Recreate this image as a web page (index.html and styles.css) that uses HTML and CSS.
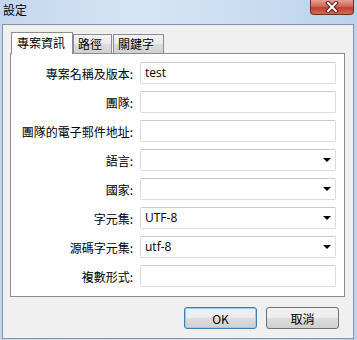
FILE: index.html
```html
<!DOCTYPE html>
<html lang="zh-Hant">
<head>
    <meta charset="UTF-8">
    <title>設定</title>
    <link rel="stylesheet" href="styles.css">
</head>
<body>
    <div class="window">
        <div class="titlebar">
            <span class="title">設定</span>
            <div class="close">
                <svg width="16" height="12" viewBox="0 0 16 12">
                    <path d="M4 2 L12 10 M12 2 L4 10" stroke="#5a1f18" stroke-width="4" stroke-linecap="square"/>
                    <path d="M4 2 L12 10 M12 2 L4 10" stroke="#ffffff" stroke-width="2" stroke-linecap="square"/>
                </svg>
            </div>
        </div>
        <div class="client">
            <div class="tabs">
                <div class="tab active">專案資訊</div>
                <div class="tab">路徑</div>
                <div class="tab">關鍵字</div>
            </div>
            <div class="pane">
                <label>專案名稱及版本:</label>
                <div class="field">test</div>
                <label>團隊:</label>
                <div class="field"></div>
                <label>團隊的電子郵件地址:</label>
                <div class="field"></div>
                <label>語言:</label>
                <div class="field select"></div>
                <label>國家:</label>
                <div class="field select"></div>
                <label>字元集:</label>
                <div class="field select">UTF-8</div>
                <label>源碼字元集:</label>
                <div class="field select">utf-8</div>
                <label>複數形式:</label>
                <div class="field"></div>
            </div>
            <div class="buttons">
                <button class="btn default">OK</button>
                <button class="btn">取消</button>
            </div>
        </div>
    </div>
</body>
</html>
```

FILE: styles.css
```css
html, body {
    margin: 0;
    padding: 0;
}

body {
    font-family: "Noto Sans CJK TC", "Noto Sans", sans-serif;
    font-size: 12px;
    color: #000;
}

.window {
    width: 357px;
    height: 340px;
    box-sizing: border-box;
    padding: 0 3px 1px 2px;
    display: flex;
    flex-direction: column;
    background: linear-gradient(90deg, #c3d7ee, #d6e5f6 40%, #c9dcf1 70%, #bcd2ec);
}

.titlebar {
    height: 24px;
    display: flex;
    align-items: flex-start;
}

.title {
    margin-left: 1px;
    margin-top: 2px;
    line-height: 16px;
}

.close {
    margin-left: auto;
    width: 44px;
    height: 15px;
    box-sizing: border-box;
    border: 1px solid #6b2b24;
    border-top: none;
    border-radius: 0 0 4px 4px;
    background: linear-gradient(#e6a192, #d0685a 45%, #c0402f 55%, #d56c4f);
    display: flex;
    align-items: center;
    justify-content: center;
}

.client {
    flex: 1;
    border: 1px solid #8693a6;
    background: #f0f0f0;
    padding: 7px 8px 0 7px;
    display: flex;
    flex-direction: column;
}

.tabs {
    height: 21px;
    display: flex;
    align-items: flex-end;
    padding-left: 1px;
    gap: 1px;
}

.tab {
    height: 19px;
    box-sizing: border-box;
    border: 1px solid #898c95;
    border-bottom: none;
    padding: 0 9px 0 4px;
    line-height: 18px;
    background: linear-gradient(#f3f3f3, #ebebeb 50%, #dddddd 51%, #cfcfcf);
}

.tab.active {
    height: 22px;
    margin-bottom: -1px;
    margin-right: -1px;
    padding: 0 7px 0 5px;
    line-height: 20px;
    background: #fff;
    position: relative;
    z-index: 1;
}

.pane {
    border: 1px solid #898c95;
    background: #fff;
    padding: 8px 8px 9px 0;
    display: grid;
    grid-template-columns: 125px 1fr;
    column-gap: 4px;
    row-gap: 7px;
    align-items: center;
}

.pane label {
    text-align: right;
    padding-right: 3px;
}

.field {
    height: 22px;
    box-sizing: border-box;
    border: 1px solid #dadde3;
    border-top-color: #c9ccd2;
    border-radius: 2px;
    padding-left: 4px;
    line-height: 20px;
    font-family: "Open Sans", "Noto Sans", sans-serif;
    font-size: 12px;
    position: relative;
}

.field.select::after {
    content: "";
    position: absolute;
    right: 4px;
    top: 8px;
    border-left: 4px solid transparent;
    border-right: 4px solid transparent;
    border-top: 4px solid #000;
}

.buttons {
    margin-top: 10px;
    display: flex;
    justify-content: flex-end;
    gap: 9px;
    padding-right: 6px;
}

.btn {
    width: 73px;
    height: 22px;
    box-sizing: border-box;
    border: 1px solid #707070;
    border-radius: 3px;
    background: linear-gradient(#f2f2f2, #ebebeb 50%, #dddddd 51%, #cfcfcf);
    font-family: "Noto Sans CJK TC", "Noto Sans", sans-serif;
    font-size: 12px;
    color: #000;
    padding: 0;
}

.btn.default {
    border-color: #3c7fb1;
    box-shadow: inset 0 0 0 1px #8fd0f0;
}
```
